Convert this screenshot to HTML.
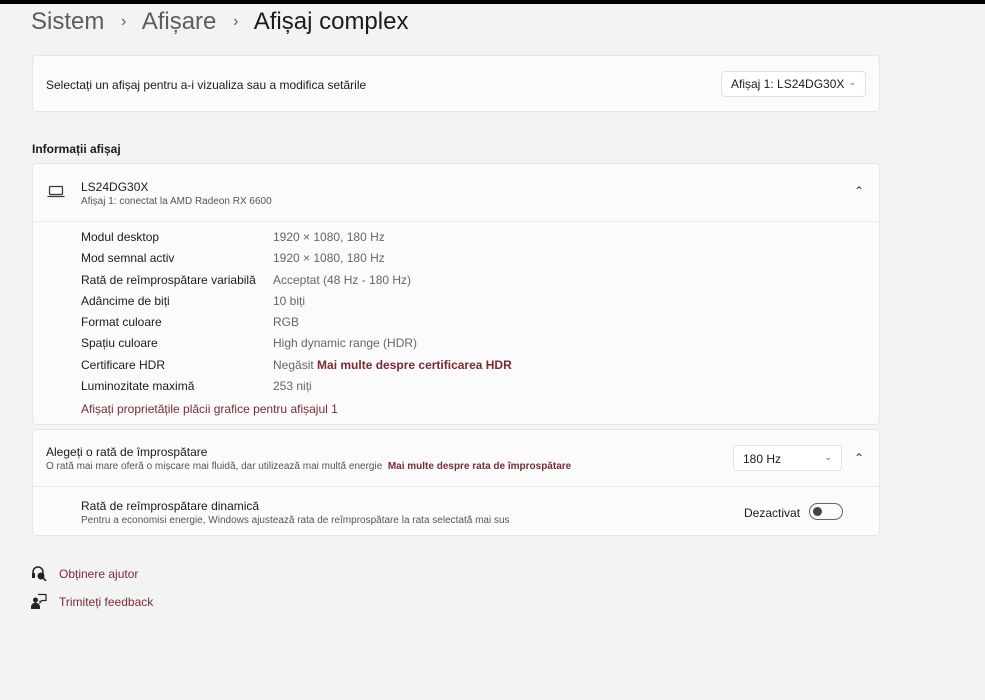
<!DOCTYPE html><html><head><meta charset="utf-8"><style>
body{margin:0;width:985px;height:700px;background:#f3f3f3;font-family:"Liberation Sans",sans-serif;position:relative;overflow:hidden;color:#1b1b1b}
.a{position:absolute;white-space:nowrap}
.card{position:absolute;left:32px;width:848px;background:#fbfbfb;border:1px solid #e6e6e6;border-radius:4px;box-sizing:border-box}
.s{font-size:12px}.xs{font-size:10px;color:#555}
.g{color:#666;font-size:12px}
.lk{color:#7a2a35}
.dd{position:absolute;background:#fff;border:1px solid #e2e2e2;border-radius:4px;font-size:12px;box-sizing:border-box}
</style></head><body>
<div class="a" style="left:0;top:0;width:985px;height:4px;background:#000"></div>
<div class="a" style="left:31px;top:8px;font-size:24px;color:#5d5d5d">Sistem <span style="font-size:16px;margin:0 10px;position:relative;top:-3px">›</span> Afișare <span style="font-size:16px;margin:0 10px;position:relative;top:-3px">›</span> <span style="color:#1b1b1b">Afișaj complex</span></div>
<div class="card" style="top:55px;height:57px"></div>
<div class="a s" style="left:46px;top:78px">Selectați un afișaj pentru a-i vizualiza sau a modifica setările</div>
<div class="dd" style="left:721px;top:71px;width:145px;height:26px;padding:5px 9px">Afișaj 1: LS24DG30X <span style="float:right;font-size:9px;color:#666">⌄</span></div>
<div class="a s" style="left:32px;top:142px;font-weight:bold">Informații afișaj</div>
<div class="card" style="top:163px;height:262px"></div>
<div class="a" style="left:32px;top:221px;width:848px;height:1px;background:#e8e8e8"></div>
<svg class="a" style="left:47px;top:185px" width="18" height="14"><rect x="2.5" y="1.5" width="13" height="8" rx="1" fill="none" stroke="#333" stroke-width="1.2"/><path d="M0.5 11.5h17" stroke="#333" stroke-width="1.3"/></svg>
<div class="a s" style="left:81px;top:180px">LS24DG30X</div>
<div class="a xs" style="left:81px;top:196px">Afișaj 1: conectat la AMD Radeon RX 6600</div>
<div class="a" style="left:854px;top:184px;font-size:12px;color:#333">⌃</div>
<div class="a s" style="left:81px;top:227px;line-height:21.3px">Modul desktop<br>Mod semnal activ<br>Rată de reîmprospătare variabilă<br>Adâncime de biți<br>Format culoare<br>Spațiu culoare<br>Certificare HDR<br>Luminozitate maximă</div>
<div class="a g" style="left:273px;top:227px;line-height:21.3px">1920 × 1080, 180 Hz<br>1920 × 1080, 180 Hz<br>Acceptat (48 Hz - 180 Hz)<br>10 biți<br>RGB<br>High dynamic range (HDR)<br>Negăsit <b class="lk">Mai multe despre certificarea HDR</b><br>253 niți</div>
<div class="a s lk" style="left:81px;top:402px">Afișați proprietățile plăcii grafice pentru afișajul 1</div>
<div class="card" style="top:429px;height:107px"></div>
<div class="a" style="left:32px;top:486px;width:848px;height:1px;background:#e8e8e8"></div>
<div class="a s" style="left:46px;top:445px">Alegeți o rată de împrospătare</div>
<div class="a xs" style="left:46px;top:461px">O rată mai mare oferă o mișcare mai fluidă, dar utilizează mai multă energie&nbsp; <b class="lk">Mai multe despre rata de împrospătare</b></div>
<div class="dd" style="left:733px;top:445px;width:109px;height:26px;padding:6px 9px">180 Hz <span style="float:right;font-size:9px;color:#666">⌄</span></div>
<div class="a" style="left:854px;top:451px;font-size:12px;color:#333">⌃</div>
<div class="a s" style="left:81px;top:499px">Rată de reîmprospătare dinamică</div>
<div class="a xs" style="left:81px;top:515px">Pentru a economisi energie, Windows ajustează rata de reîmprospătare la rata selectată mai sus</div>
<div class="a s" style="left:744px;top:506px">Dezactivat</div>
<div class="a" style="left:809px;top:503px;width:32px;height:15px;border:1px solid #666;border-radius:9px"></div>
<div class="a" style="left:813px;top:507px;width:9px;height:9px;border-radius:50%;background:#444"></div>
<svg class="a" style="left:31px;top:565px" width="16" height="16"><path d="M2 9V7a5 5 0 0 1 10 0v2" fill="none" stroke="#222" stroke-width="1.5"/><rect x="1" y="8" width="3" height="5" fill="#222"/><circle cx="10" cy="11" r="3.5" fill="#222"/><path d="M12 13l3 3" stroke="#222" stroke-width="1.6"/></svg>
<div class="a s lk" style="left:59px;top:567px">Obținere ajutor</div>
<svg class="a" style="left:31px;top:593px" width="16" height="16"><circle cx="4.5" cy="7" r="2.5" fill="#222"/><path d="M0 16v-2a4 4 0 0 1 9 0v2z" fill="#222"/><path d="M7 1.5h8v6h-4l-2 2v-2" fill="none" stroke="#222" stroke-width="1.2"/></svg>
<div class="a s lk" style="left:59px;top:595px">Trimiteți feedback</div>
</body></html>
